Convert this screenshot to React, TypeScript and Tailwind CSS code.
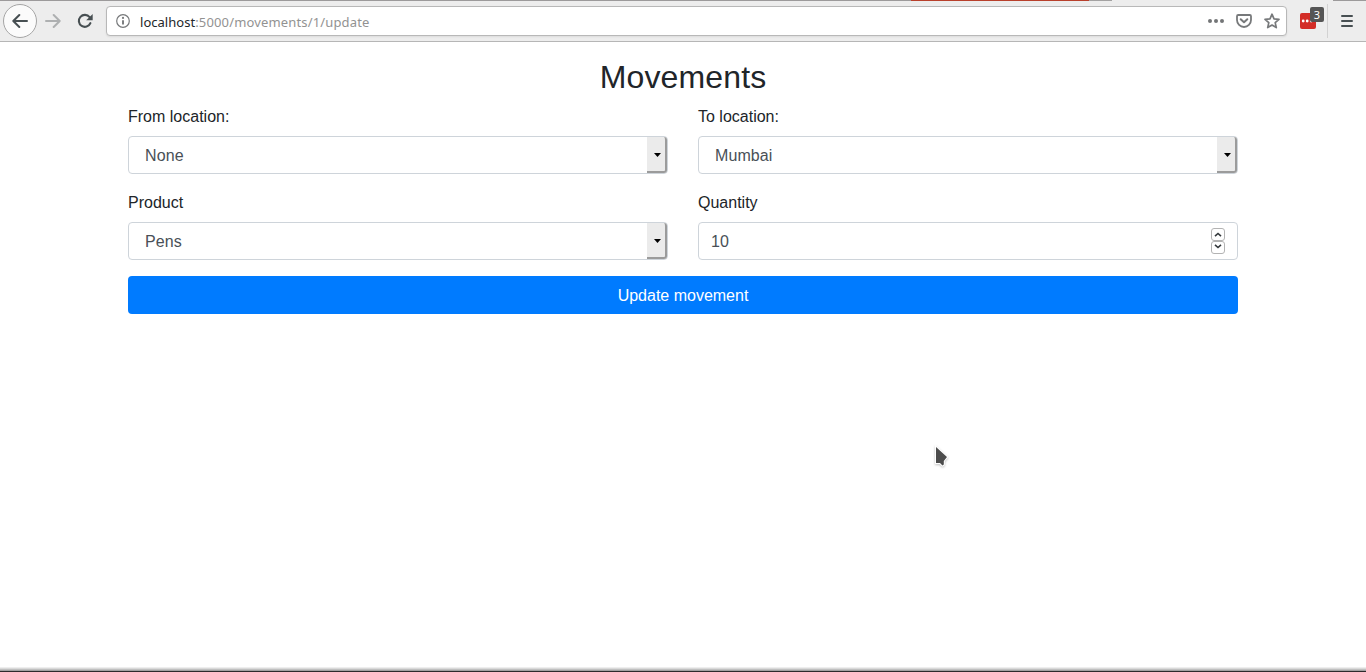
import type { ReactNode } from "react";

function BrowserBar() {
  return (
    <header className="relative h-[42px] shrink-0 border-b border-[#b6b6b6] bg-[#ededed]">
      <div className="absolute inset-x-0 top-0 flex h-px">
        <span className="w-[911px] bg-[#9c9a9b]" />
        <span className="w-[178px] bg-[#b8402c]" />
        <span className="w-[23px] bg-[#a3a2a2]" />
        <span className="w-[221px] bg-[#ededed]" />
        <span className="grow bg-[#9c9a9b]" />
      </div>
      <div className="flex h-[42px] items-center pl-[3px]">
        <button className="flex size-[34px] items-center justify-center rounded-full border border-[#a5a5a5] bg-[#fbfbfb]" aria-label="Back">
          <svg width="16" height="16" viewBox="0 0 16 16" fill="none" stroke="#474f52" strokeWidth="2" strokeLinecap="round" strokeLinejoin="round">
            <path d="M15 8H1.5M7.3 2L1.3 8l6 6" />
          </svg>
        </button>
        <button className="ml-2 flex size-4 items-center justify-center" aria-label="Forward">
          <svg width="16" height="16" viewBox="0 0 16 16" fill="none" stroke="#aeb0b1" strokeWidth="2" strokeLinecap="round" strokeLinejoin="round">
            <path d="M1 8h13.5M8.7 2l6 6-6 6" />
          </svg>
        </button>
        <button className="ml-4 flex size-4 items-center justify-center" aria-label="Reload">
          <svg width="16" height="16" viewBox="0 0 16 16">
            <path d="M13.4 10.2A6 6 0 1 1 12.6 4.2" fill="none" stroke="#474f52" strokeWidth="2.1" strokeLinecap="round" />
            <path d="M15.7 1v6.3H9.2z" fill="#474f52" />
          </svg>
        </button>
        <div className="ml-[13px] flex h-[30px] w-[1181px] items-center rounded-[4px] border border-[#b8b8b8] bg-white pr-[6px] pl-[9px] shadow-[0_1px_2px_rgba(0,0,0,0.08)]">
          <svg width="14" height="14" viewBox="0 0 14 14">
            <circle cx="7" cy="7" r="6.3" fill="none" stroke="#77797b" strokeWidth="1.2" />
            <path d="M7 6.2v4.4" stroke="#77797b" strokeWidth="1.9" />
            <circle cx="7" cy="3.9" r="1.1" fill="#77797b" />
          </svg>
          <span className="ml-[10px] grow pt-[2px] font-['Noto_Sans',sans-serif] text-[13px] leading-[18px] tracking-[0.15px] text-[#929292]">
            <span className="tracking-[0.03px] text-[#23272a]">localhost</span>:5000/movements/1/update
          </span>
          <svg width="16" height="16" viewBox="0 0 16 16" fill="#737577">
            <circle cx="2" cy="8" r="2" />
            <circle cx="8" cy="8" r="2" />
            <circle cx="14" cy="8" r="2" />
          </svg>
          <svg className="ml-3" width="16" height="16" viewBox="0 0 16 16" fill="none" stroke="#77797b" strokeLinecap="round" strokeLinejoin="round">
            <path d="M2.2 2h11.6c.7 0 1.2.5 1.2 1.2V7A7 7 0 0 1 1 7V3.2C1 2.5 1.5 2 2.2 2z" strokeWidth="1.8" />
            <path d="M4.7 6.2L8 9.3l3.3-3.1" strokeWidth="2" />
          </svg>
          <svg className="ml-3" width="16" height="16" viewBox="0 0 16 16" fill="none" stroke="#77797b" strokeWidth="1.7" strokeLinejoin="round">
            <path d="M8 1.2l2 4.6 5 .5-3.8 3.3 1.1 5L8 12l-4.3 2.6 1.1-5L1 6.3l5-.5z" />
          </svg>
        </div>
        <div className="relative ml-[13px] flex size-4 items-center justify-center rounded-[2px] bg-[#d32d27]">
          <svg width="14" height="4" viewBox="0 0 14 4" fill="#fff">
            <circle cx="2.2" cy="2" r="1.4" />
            <circle cx="6.2" cy="2" r="1.4" />
            <circle cx="10.2" cy="2" r="1.4" />
          </svg>
          <span className="absolute -top-[6px] left-[10px] flex h-[15px] w-[14px] items-center justify-center rounded-[2px] bg-[#555] font-['Noto_Sans',sans-serif] text-[11px] leading-[15px] text-white">3</span>
        </div>
        <span className="ml-[11px] h-[34px] w-px bg-[#d2d2d2]" />
        <svg className="ml-[13px]" width="12" height="12" viewBox="0 0 12 12" fill="none" stroke="#474f52" strokeWidth="2" strokeLinecap="round">
          <path d="M1 1h10M1 6h10M1 11h10" />
        </svg>
      </div>
    </header>
  );
}

function Field({ label, children }: { label: string; children: ReactNode }) {
  return (
    <div>
      <div className="mb-2 h-6 leading-[26px]">{label}</div>
      {children}
    </div>
  );
}

function SelectBox({ value }: { value: string }) {
  return (
    <div className="flex h-[38px] items-center rounded-[4px] border border-[#ced4da] bg-white pl-4 text-[#495057]">
      <span className="grow pt-[2px] tracking-[0.1px]">{value}</span>
      <span className="flex h-[36px] w-5 items-center justify-center rounded-r-[3px] border-r-2 border-b-2 border-[#9b9b9b] bg-[#ebebeb] pt-[2px] pl-[3px]">
        <svg width="7" height="4" viewBox="0 0 7 4">
          <path d="M0 0h7L3.5 4z" fill="#000" />
        </svg>
      </span>
    </div>
  );
}

function Spinner() {
  return (
    <div className="flex w-[14px] flex-col">
      <span className="flex h-[13px] items-center justify-center rounded-[3px] border border-[#b3b3b3] bg-white">
        <svg width="8" height="5" viewBox="0 0 8 5" fill="none" stroke="#33383b" strokeWidth="1.6">
          <path d="M1 4.2l3-2.7 3 2.7" />
        </svg>
      </span>
      <span className="flex h-[13px] items-center justify-center rounded-[3px] border border-[#b3b3b3] bg-white pb-[2px]">
        <svg width="8" height="5" viewBox="0 0 8 5" fill="none" stroke="#33383b" strokeWidth="1.6">
          <path d="M1 .8l3 2.7L7 .8" />
        </svg>
      </span>
    </div>
  );
}

export default function App() {
  return (
    <div className="relative flex h-[672px] w-[1366px] flex-col overflow-hidden bg-white font-['Liberation_Sans',Arial,sans-serif] text-base text-[#212529]">
      <BrowserBar />
      <main className="mx-auto w-[1110px] grow pt-4">
        <h2 className="mb-2 text-center text-[32px] leading-[38.4px] tracking-[0.15px]">Movements</h2>
        <div className="grid grid-cols-2 gap-x-[30px] gap-y-4">
          <Field label="From location:">
            <SelectBox value="None" />
          </Field>
          <Field label="To location:">
            <SelectBox value="Mumbai" />
          </Field>
          <Field label="Product">
            <SelectBox value="Pens" />
          </Field>
          <Field label="Quantity">
            <div className="flex h-[38px] items-center justify-between rounded-[4px] border border-[#ced4da] bg-white px-3 text-[#495057]">
              <span className="pt-[2px]">10</span>
              <Spinner />
            </div>
          </Field>
        </div>
        <button className="mt-4 h-[38px] w-full rounded-[4px] bg-[#007bff] pt-[2px] text-center text-white">Update movement</button>
      </main>
      <footer className="flex h-[5px] shrink-0 flex-col">
        <span className="h-px bg-[#eeeeee]" />
        <span className="h-px bg-[#dadada]" />
        <span className="h-px bg-[#c0c0c0]" />
        <span className="h-px bg-[#a2a1a1]" />
        <span className="h-px bg-[#2c2a2b]" />
      </footer>
      <svg className="absolute top-[444px] left-[932px] drop-shadow-[0_1px_1px_rgba(0,0,0,0.25)]" width="20" height="26" viewBox="0 0 20 26">
        <path d="M4 3v16h4l2.5 2.5 1.300-1V17L15 13z" fill="#4c4c4c" stroke="#fff" strokeWidth="2" paintOrder="stroke" />
      </svg>
    </div>
  );
}
